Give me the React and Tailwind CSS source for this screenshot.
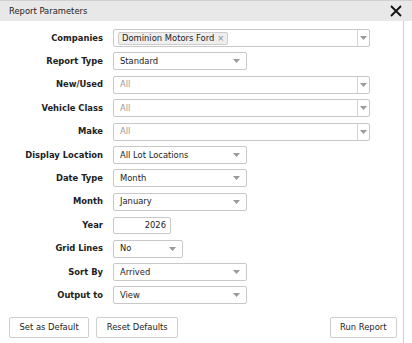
import React from 'react';

const Arrow = () => (
    <svg width="7" height="4" viewBox="0 0 7 4" className="shrink-0">
        <path d="M0 0 L7 0 L3.5 4 Z" fill="#999" />
    </svg>
);

// short dropdown, no separator
const Select = ({ value, w = 'w-[134px]' }) => (
    <div className={`${w} h-[18px] border border-[#c8c8c8] rounded-[2px] bg-white flex items-center justify-between pl-[6px] pr-[6px]`}>
        <span className="text-[#222]">{value}</span>
        <Arrow />
    </div>
);

// wide multi-select with separator
const Multi = ({ children }) => (
    <div className="w-[257px] h-[18px] border border-[#c8c8c8] rounded-[2px] bg-white flex items-center">
        <div className="flex-1 flex items-center pl-[4px] h-full">{children}</div>
        <div className="w-[12px] h-full border-l border-[#d4d4d4] flex items-center justify-center">
            <Arrow />
        </div>
    </div>
);

const Row = ({ label, children }) => (
    <div className="flex items-center h-[18px]">
        <div className="w-[104px] pr-[10px] text-right font-bold text-[#222]">{label}</div>
        {children}
    </div>
);

const Button = ({ children }) => (
    <button className="h-[21px] px-[9.5px] border border-[#cfcfcf] rounded-[2px] bg-white text-[#222]">{children}</button>
);

export default function App() {
    return (
        <div className="w-[412px] h-[343px] bg-white text-[8.4px] flex flex-col" style={{ fontFamily: '"DejaVu Sans", Verdana, sans-serif' }}>
            {/* Header */}
            <div className="h-[21px] bg-[#e8e8e8] border-t border-[#d0d0d0] flex items-center justify-between pl-[9px] pr-[10px] shrink-0">
                <span className="text-[#222]">Report Parameters</span>
                <svg width="12" height="12" viewBox="0 0 12 12">
                    <path d="M1 1 L11 11 M11 1 L1 11" stroke="#111" strokeWidth="1.8" />
                </svg>
            </div>

            {/* Body */}
            <div className="w-[404px] flex-1 border-r border-[#cfcfcf] flex flex-col">
                <div className="flex flex-col gap-y-[5.4px] pt-[8px] pl-[9px]">
                    <Row label="Companies">
                        <Multi>
                            <span className="h-[13px] bg-[#eeeeee] border border-[#cccccc] rounded-[2px] px-[3px] flex items-center text-[#222]">
                                Dominion Motors Ford <span className="ml-[3px] text-[#888]">×</span>
                            </span>
                        </Multi>
                    </Row>
                    <Row label="Report Type"><Select value="Standard" /></Row>
                    <Row label="New/Used"><Multi><span className="pl-[2px] text-[#999]">All</span></Multi></Row>
                    <Row label="Vehicle Class"><Multi><span className="pl-[2px] text-[#999]">All</span></Multi></Row>
                    <Row label="Make"><Multi><span className="pl-[2px] text-[#999]">All</span></Multi></Row>
                    <Row label="Display Location"><Select value="All Lot Locations" /></Row>
                    <Row label="Date Type"><Select value="Month" /></Row>
                    <Row label="Month"><Select value="January" /></Row>
                    <Row label="Year">
                        <div className="w-[58px] h-[17px] border border-[#c8c8c8] rounded-[2px] flex items-center justify-end pr-[4px] text-[#222]">2026</div>
                    </Row>
                    <Row label="Grid Lines"><Select value="No" w="w-[70px]" /></Row>
                    <Row label="Sort By"><Select value="Arrived" /></Row>
                    <Row label="Output to"><Select value="View" /></Row>
                </div>

                <div className="flex items-center justify-between pt-[13px] pl-[9px] pr-[6px]">
                    <div className="flex gap-[7px]">
                        <Button>Set as Default</Button>
                        <Button>Reset Defaults</Button>
                    </div>
                    <Button>Run Report</Button>
                </div>
            </div>
        </div>
    );
}
